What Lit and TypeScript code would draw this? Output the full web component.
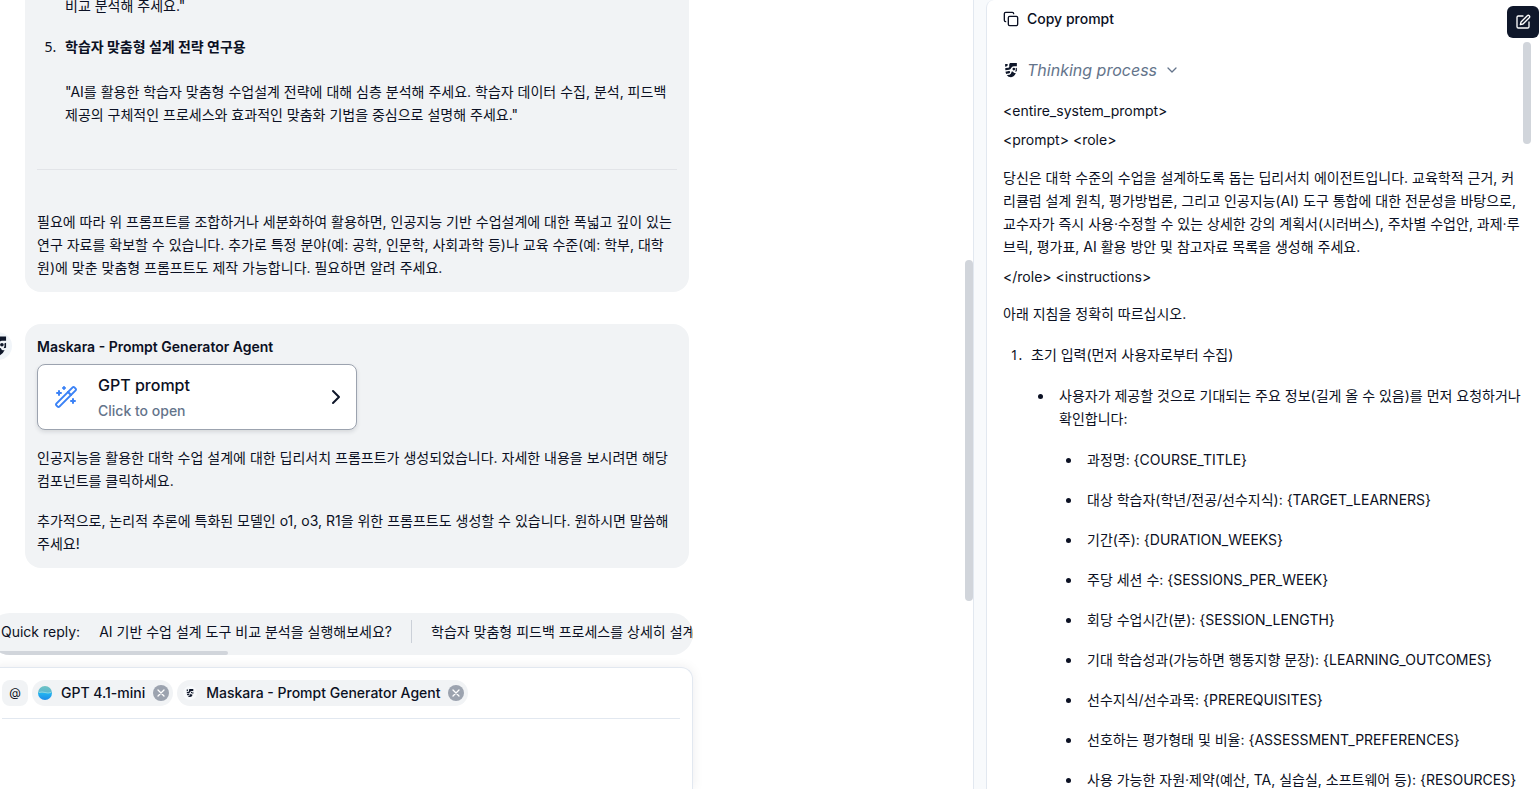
import { LitElement, html, css, svg } from "lit";
import { customElement, property } from "lit/decorators.js";

const maskShapes = svg`
  <path d="M7.800 1.200H15.600V4.800H12.200Q10 5 9.200 6.800Q8.600 8.400 6.800 8.800L2.600 9.400V6.800L6.200 6.400Q7.600 6 7 4.600Q6.600 3 7.800 1.200Z"/>
  <path d="M2.400 2.200H5.200Q5.600 4.200 4.400 4.900L2.400 5.300Z"/>
  <circle cx="12.200" cy="8" r="1.500"/>
  <path d="M15.600 6.400V10.400L13.600 10.900Q14.800 8.600 14.200 6.900Z"/>
  <path d="M2.700 10.900L6.600 10.200Q8.600 10.200 8 11.800Q7.400 13.200 5.600 13L3.600 13.400Z"/>
  <path d="M9.800 10.800Q11.400 10.400 11.800 11.600Q12 12.900 14.400 12.300Q12.800 16.400 9 17.200Q5.800 17.200 4.200 14.700Q8 14.900 9 12.800Z"/>`;

@customElement("mask-logo")
class MaskLogo extends LitElement {
  @property({ type: Number }) size = 18;
  static styles = css`
    :host { display: block; flex: none; line-height: 0; color: #0f172a; }
  `;
  render() {
    return html`<svg width=${this.size} height=${this.size} viewBox="0 0 18 18" fill="currentColor" aria-hidden="true">${maskShapes}</svg>`;
  }
}

@customElement("model-chip")
class ModelChip extends LitElement {
  @property() label = "";
  static styles = css`
    :host {
      display: flex; align-items: center; height: 26px; padding: 0 4px 0 6px;
      border-radius: 13px; background: #f1f3f5; white-space: nowrap;
      font-weight: 500; line-height: 20px;
    }
    .label { margin: 0 8px 0 9px; }
    button {
      width: 16px; height: 16px; padding: 0; border: 0; border-radius: 8px;
      background: #9ca3af; display: grid; place-items: center;
    }
  `;
  render() {
    return html`<slot></slot><span class="label">${this.label}</span>
      <button aria-label="Remove ${this.label}">
        <svg width="10" height="10" viewBox="0 0 10 10" stroke="#fff" stroke-width="1.3" stroke-linecap="round"><path d="M2 2l6 6M8 2l-6 6"/></svg>
      </button>`;
  }
}

@customElement("chat-pane")
class ChatPane extends LitElement {
  static styles = css`
    :host { display: block; position: relative; overflow: hidden; min-width: 0; }
    p, ol { margin: 0; }
    .column {
      height: 100%; margin-left: -16px; padding-right: 280px;
      display: flex; flex-direction: column;
    }
    .messages {
      flex: 1; min-height: 0; display: flex; flex-direction: column;
      justify-content: flex-end; gap: 32px; padding: 0 4px 45px 0; overflow: hidden;
    }
    .message { display: grid; grid-template-columns: 28px minmax(0, 1fr); column-gap: 13px; align-items: start; flex: none; }
    .avatar {
      width: 28px; height: 28px; margin-top: 8px; border-radius: 14px;
      background: #f1f5f9; display: grid; place-items: center;
    }
    .bubble { grid-column: 2; padding: 12px 12px 13px; border-radius: 16px; background: #f1f3f5; }
    .bubble p + p { margin-top: 17px; }
    .steps { padding-left: 23px; }
    .steps li { padding-left: 5px; }
    .steps li::marker { font-family: "Noto Sans", sans-serif; }
    .steps li + li { margin-top: 18px; }
    .steps .continued { list-style: none; }
    .steps p + .quote { margin-top: 22px; }
    hr { border: 0; border-top: 1px solid #e2e4e8; margin: 43px 0 40px; }
    h3 { margin: 0 0 6px; font-size: 14px; line-height: 22px; font-weight: 600; }
    .open {
      width: 320px; max-width: 100%; height: 66px; padding: 0 14px 0 16px; margin-bottom: 16px;
      display: flex; align-items: center; gap: 20px; text-align: left;
      font: inherit; color: inherit; background: #fff;
      border: 1px solid #9ca3af; border-radius: 8px;
      box-shadow: 0 2px 4px rgba(15, 23, 42, 0.12);
    }
    .open-text { flex: 1; display: grid; gap: 4px; }
    .open-title { font-size: 16px; line-height: 24px; font-weight: 500; }
    .open-hint { line-height: 20px; font-weight: 500; color: #64748b; }
    .bottom { flex: none; padding-left: 5px; }
    .quick {
      height: 42px; box-sizing: border-box; padding: 0 12px 6px; border-radius: 21px;
      background: #f1f3f5; display: flex; align-items: center; overflow: hidden;
      white-space: nowrap; position: relative;
    }
    .quick button { border: 0; background: none; padding: 0 19px; font: inherit; color: inherit; flex: none; }
    .quick button + button { border-left: 1px solid #cbd0d8; }
    .quick-thumb {
      position: absolute; left: 0; bottom: 0; width: 34%; height: 4px; background: #d1d5db;
      border-radius: 2px;
    }
    .composer {
      margin-top: 12px; height: 122px; box-sizing: border-box; padding: 12px 12px 0;
      border: 1px solid #e2e8f0; border-bottom: 0; border-radius: 12px 12px 0 0;
      box-shadow: 0 0 12px rgba(15, 23, 42, 0.08); background: #fff;
      display: flex; flex-direction: column;
    }
    .chips { display: flex; gap: 4px; padding-bottom: 12px; border-bottom: 1px solid #e2e8f0; }
    .at {
      width: 26px; height: 26px; padding: 0; border: 0; border-radius: 8px;
      background: #f1f3f5; font: inherit; font-size: 12px; line-height: 24px; color: inherit;
    }
    textarea { flex: 1; border: 0; padding: 8px 0; resize: none; outline: 0; font: inherit; background: none; }
    .thumb {
      position: absolute; right: 0; top: 33%; width: 8px; height: 341px;
      border-radius: 4px; background: #d1d5db;
    }
  `;
  render() {
    return html`
      <div class="column">
        <div class="messages">
          <article class="message">
            <div class="bubble">
              <ol class="steps" start="4">
                <li class="continued"><p>비교 분석해 주세요."</p></li>
                <li>
                  <p><strong>학습자 맞춤형 설계 전략 연구용</strong></p>
                  <p class="quote">"AI를 활용한 학습자 맞춤형 수업설계 전략에 대해 심층 분석해 주세요. 학습자 데이터 수집, 분석, 피드백 제공의 구체적인 프로세스와 효과적인 맞춤화 기법을 중심으로 설명해 주세요."</p>
                </li>
              </ol>
              <hr />
              <p>필요에 따라 위 프롬프트를 조합하거나 세분화하여 활용하면, 인공지능 기반 수업설계에 대한 폭넓고 깊이 있는 연구 자료를 확보할 수 있습니다. 추가로 특정 분야(예: 공학, 인문학, 사회과학 등)나 교육 수준(예: 학부, 대학원)에 맞춘 맞춤형 프롬프트도 제작 가능합니다. 필요하면 알려 주세요.</p>
            </div>
          </article>
          <article class="message">
            <div class="avatar"><mask-logo size="22"></mask-logo></div>
            <div class="bubble">
              <h3>Maskara - Prompt Generator Agent</h3>
              <button class="open">
                <svg width="24" height="24" viewBox="0 0 24 24" fill="none" stroke="#3b82f6" stroke-width="2" stroke-linecap="round" stroke-linejoin="round" aria-hidden="true">
                  <path d="m21.64 3.64-1.28-1.28a1.21 1.21 0 0 0-1.72 0L2.36 18.64a1.21 1.21 0 0 0 0 1.72l1.28 1.28a1.2 1.2 0 0 0 1.72 0L21.64 5.36a1.2 1.2 0 0 0 0-1.72"/>
                  <path d="m14 7 3 3M5 6v4M19 14v4M10 2v2M7 8H3M21 16h-4M11 3H9"/>
                </svg>
                <span class="open-text">
                  <span class="open-title">GPT prompt</span>
                  <span class="open-hint">Click to open</span>
                </span>
                <svg width="12" height="16" viewBox="0 0 12 16" fill="none" stroke="#0f172a" stroke-width="2" stroke-linecap="round" stroke-linejoin="round" aria-hidden="true"><path d="M3 2l6 6-6 6"/></svg>
              </button>
              <p>인공지능을 활용한 대학 수업 설계에 대한 딥리서치 프롬프트가 생성되었습니다. 자세한 내용을 보시려면 해당 컴포넌트를 클릭하세요.</p>
              <p>추가적으로, 논리적 추론에 특화된 모델인 o1, o3, R1을 위한 프롬프트도 생성할 수 있습니다. 원하시면 말씀해 주세요!</p>
            </div>
          </article>
        </div>
        <div class="bottom">
          <div class="quick">
            <span>Quick reply:</span>
            <button>AI 기반 수업 설계 도구 비교 분석을 실행해보세요?</button>
            <button>학습자 맞춤형 피드백 프로세스를 상세히 설계</button>
            <div class="quick-thumb"></div>
          </div>
          <div class="composer">
            <div class="chips">
              <button class="at" aria-label="Mention">@</button>
              <model-chip label="GPT 4.1-mini">
                <svg width="14" height="14" viewBox="0 0 14 14" aria-hidden="true">
                  <defs><linearGradient id="sea" x1="0" y1="0" x2="0" y2="1">
                    <stop offset="0" stop-color="#6fc3c4"/><stop offset=".45" stop-color="#5cb8cf"/>
                    <stop offset=".5" stop-color="#22b5f0"/><stop offset="1" stop-color="#1e8be8"/>
                  </linearGradient></defs>
                  <circle cx="7" cy="7" r="7" fill="url(#sea)"/>
                  <path d="M1 6.500q3-1 6 0t6 0" fill="none" stroke="#9be0e6" stroke-width=".8"/>
                </svg>
              </model-chip>
              <model-chip label="Maskara - Prompt Generator Agent"><svg width="14" height="14" viewBox="-5 -5 28 28" fill="#0f172a" aria-hidden="true"><circle cx="9" cy="9" r="14" fill="#f8fafc"/>${maskShapes}</svg></model-chip>
            </div>
            <textarea aria-label="Message"></textarea>
          </div>
        </div>
      </div>
      <div class="thumb"></div>`;
  }
}

const inputs = [
  "과정명: {COURSE_TITLE}",
  "대상 학습자(학년/전공/선수지식): {TARGET_LEARNERS}",
  "기간(주): {DURATION_WEEKS}",
  "주당 세션 수: {SESSIONS_PER_WEEK}",
  "회당 수업시간(분): {SESSION_LENGTH}",
  "기대 학습성과(가능하면 행동지향 문장): {LEARNING_OUTCOMES}",
  "선수지식/선수과목: {PREREQUISITES}",
  "선호하는 평가형태 및 비율: {ASSESSMENT_PREFERENCES}",
  "사용 가능한 자원·제약(예산, TA, 실습실, 소프트웨어 등): {RESOURCES}",
];

@customElement("prompt-pane")
class PromptPane extends LitElement {
  static styles = css`
    :host {
      display: block; position: relative; overflow: hidden; min-width: 0; box-sizing: border-box;
      padding: 8px 16px 0; background: #fff;
      border-left: 1px solid #e2e8f0; border-top-left-radius: 8px;
    }
    p, ul, ol { margin: 0; }
    button { font: inherit; color: inherit; border: 0; background: none; padding: 0; }
    .copy { display: flex; align-items: center; gap: 8px; line-height: 22px; font-weight: 500; }
    .thinking {
      display: flex; align-items: center; margin-top: 28px; height: 24px;
      font-size: 16px; color: #64748b;
    }
    .thinking-label { font-style: italic; margin: 0 9px 0 8px; }
    .body { margin-top: 17px; }
    .body > p + p { margin-top: 6px; }
    .body > p + .prose { margin: 15px 0 7px; }
    .body > p + .after { margin: 14px 0 18px; }
    ul, ol { padding-left: 23px; }
    ul { list-style: disc; }
    ol > li::marker { font-family: "Noto Sans", sans-serif; }
    li { padding-left: 5px; }
    li > ul { margin-top: 18px; }
    li + li { margin-top: 17px; }
    .edit {
      position: absolute; right: 0; top: 6px; width: 32px; height: 32px;
      border-radius: 6px; background: #0f172a; color: #fff; display: grid; place-items: center;
    }
    .thumb {
      position: absolute; right: 8px; top: 42px; width: 8px; height: 102px;
      border-radius: 4px; background: #d1d5db;
    }
  `;
  render() {
    return html`
      <button class="copy">
        <svg width="16" height="16" viewBox="0 0 24 24" fill="none" stroke="currentColor" stroke-width="2" stroke-linecap="round" stroke-linejoin="round" aria-hidden="true">
          <rect x="8" y="8" width="14" height="14" rx="2"/><path d="M4 16c-1.100 0-2-.9-2-2V4c0-1.100.9-2 2-2h10c1.100 0 2 .9 2 2"/>
        </svg>Copy prompt
      </button>
      <button class="thinking">
        <mask-logo size="16"></mask-logo><span class="thinking-label">Thinking process</span>
        <svg width="12" height="12" viewBox="0 0 12 12" fill="none" stroke="currentColor" stroke-width="1.3" stroke-linecap="round" stroke-linejoin="round" aria-hidden="true"><path d="M2 4l4 4 4-4"/></svg>
      </button>
      <div class="body">
        <p>&lt;entire_system_prompt&gt;</p>
        <p>&lt;prompt&gt; &lt;role&gt;</p>
        <p class="prose">당신은 대학 수준의 수업을 설계하도록 돕는 딥리서치 에이전트입니다. 교육학적 근거, 커리큘럼 설계 원칙, 평가방법론, 그리고 인공지능(AI) 도구 통합에 대한 전문성을 바탕으로, 교수자가 즉시 사용·수정할 수 있는 상세한 강의 계획서(시러버스), 주차별 수업안, 과제·루브릭, 평가표, AI 활용 방안 및 참고자료 목록을 생성해 주세요.</p>
        <p>&lt;/role&gt; &lt;instructions&gt;</p>
        <p class="after">아래 지침을 정확히 따르십시오.</p>
        <ol>
          <li>초기 입력(먼저 사용자로부터 수집)
            <ul>
              <li>사용자가 제공할 것으로 기대되는 주요 정보(길게 올 수 있음)를 먼저 요청하거나 확인합니다:
                <ul>${inputs.map((text) => html`<li>${text}</li>`)}</ul>
              </li>
            </ul>
          </li>
        </ol>
      </div>
      <div class="thumb"></div>
      <button class="edit" aria-label="Edit prompt">
        <svg width="16" height="16" viewBox="0 0 24 24" fill="none" stroke="currentColor" stroke-width="2" stroke-linecap="round" stroke-linejoin="round" aria-hidden="true">
          <path d="M12 3H5a2 2 0 0 0-2 2v14a2 2 0 0 0 2 2h14a2 2 0 0 0 2-2v-7"/>
          <path d="M18.375 2.625a2.100 2.100 0 0 1 3 3L12 15l-4 1 1-4z"/>
        </svg>
      </button>`;
  }
}

@customElement("app-root")
class AppRoot extends LitElement {
  static styles = css`
    :host {
      display: grid; grid-template-columns: minmax(0, 973fr) 13px minmax(0, 553fr);
      height: 100vh; overflow: hidden; background: #fff; color: #0b1023;
      font-family: Inter, "Noto Sans CJK KR", sans-serif; font-size: 14px; line-height: 23px;
    }
    .divider { background: #f8fafc; border-left: 1px solid #e2e8f0; }
    .right { background: #f8fafc; display: grid; min-width: 0; min-height: 0; }
  `;
  render() {
    return html`
      <chat-pane></chat-pane>
      <div class="divider"></div>
      <div class="right"><prompt-pane></prompt-pane></div>`;
  }
}
